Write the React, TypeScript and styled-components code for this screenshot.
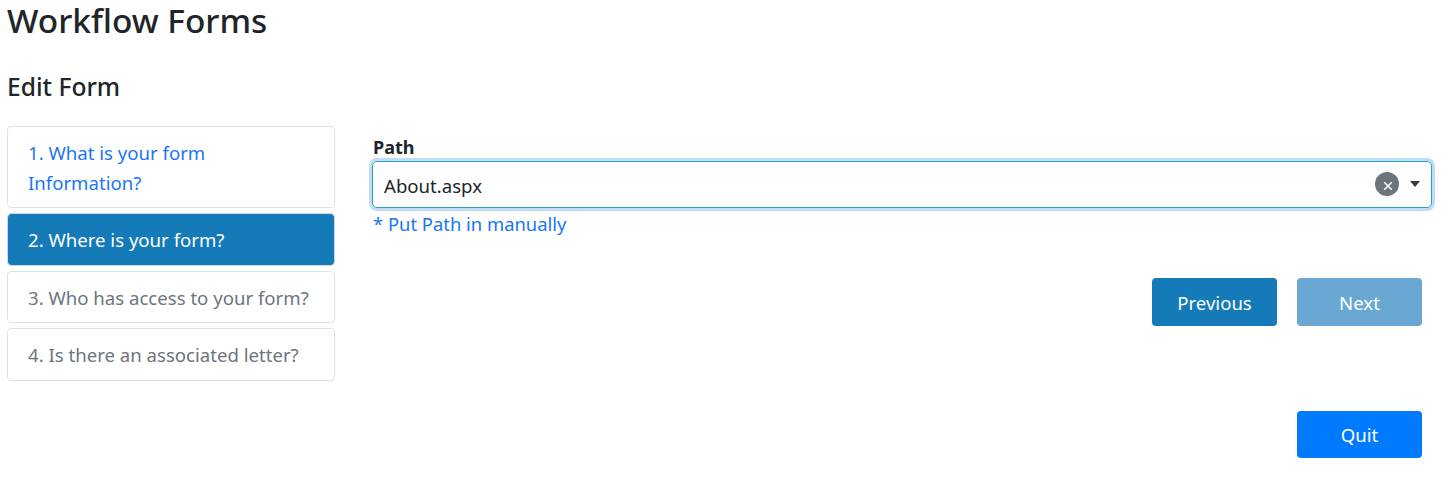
import React from 'react';
import styled, { createGlobalStyle } from 'styled-components';

const GlobalStyle = createGlobalStyle`
	* {
		box-sizing: border-box;
	}
	html, body {
		margin: 0;
		padding: 0;
		background: #fff;
		font-family: 'Noto Sans', 'Open Sans', sans-serif;
		color: #212529;
	}
`;

const Page = styled.div`
	width: 1443px;
	height: 486px;
	padding: 0 7px;
	overflow: hidden;
`;

const Title = styled.h1`
	margin: 0;
	height: 70px;
	font-size: 33.4px;
	line-height: 40px;
	font-weight: 500;
`;

const SubTitle = styled.h2`
	margin: 0;
	height: 56px;
	font-size: 24.6px;
	line-height: 34px;
	font-weight: 500;
`;

const Columns = styled.div`
	display: flex;
	align-items: flex-start;
`;

const Steps = styled.div`
	width: 328px;
	flex: none;
	display: flex;
	flex-direction: column;
	gap: 5px;
`;

const Step = styled.a<{ $state: 'done' | 'active' | 'todo' }>`
	display: block;
	padding: 11px 20px 10px;
	font-size: 18.6px;
	line-height: 29.6px;
	border-radius: 4px;
	border: 1px solid ${(p) => (p.$state === 'active' ? '#c4dbea' : '#dee2e8')};
	background: ${(p) => (p.$state === 'active' ? '#157ab8' : '#fff')};
	background-clip: padding-box;
	color: ${(p) =>
		p.$state === 'active' ? '#fff' : p.$state === 'done' ? '#1a76f5' : '#6c757d'};
`;

const Content = styled.div`
	flex: 1;
	margin-left: 37px;
	padding-top: 9px;
	min-width: 0;
`;

const Label = styled.label`
	display: block;
	height: 26px;
	padding-left: 1px;
	font-size: 18px;
	line-height: 24px;
	font-weight: 700;
	color: #212529;
`;

const Select = styled.div`
	display: flex;
	align-items: center;
	height: 47px;
	margin-right: 4px;
	padding: 0 11px;
	border: 1px solid #2a9fc4;
	border-radius: 5px;
	box-shadow: 0 0 0 3px #c0dcf7;
	font-size: 18.6px;
	color: #212529;
`;

const SelectValue = styled.span`
	flex: 1;
	padding-top: 1px;
`;

const ClearButton = styled.span`
	width: 24px;
	height: 24px;
	display: flex;
	align-items: center;
	justify-content: center;
	border-radius: 50%;
	background: #6c757d;
	margin-right: 11px;
	margin-bottom: 1px;
`;

const Caret = styled.span`
	width: 0;
	height: 0;
	margin-bottom: 1px;
	border-left: 5px solid transparent;
	border-right: 5px solid transparent;
	border-top: 6px solid #343a40;
`;

const Hint = styled.div`
	margin-top: 3px;
	padding-left: 1px;
	font-size: 18.4px;
	line-height: 26px;
	color: #1a76f5;
`;

const ButtonRow = styled.div<{ $top: number }>`
	display: flex;
	justify-content: flex-end;
	gap: 20px;
	margin-top: ${(p) => p.$top}px;
	margin-right: 14px;
`;

const Button = styled.button<{ $variant: 'primary' | 'muted' | 'quit' }>`
	width: 125px;
	height: ${(p) => (p.$variant === 'quit' ? 47 : 48)}px;
	border: 0;
	border-radius: 4px;
	font-family: inherit;
	font-size: 18.6px;
	color: #fff;
	background: ${(p) =>
		p.$variant === 'primary' ? '#157ab8' : p.$variant === 'muted' ? '#6aa8d3' : '#007bff'};
`;

export default function App() {
	return (
		<Page>
			<GlobalStyle />
			<Title>Workflow Forms</Title>
			<SubTitle>Edit Form</SubTitle>
			<Columns>
				<Steps>
					<Step $state="done">1. What is your form Information?</Step>
					<Step $state="active">2. Where is your form?</Step>
					<Step $state="todo">3. Who has access to your form?</Step>
					<Step $state="todo">4. Is there an associated letter?</Step>
				</Steps>
				<Content>
					<Label>Path</Label>
					<Select>
						<SelectValue>About.aspx</SelectValue>
						<ClearButton>
							<svg width="14" height="14" viewBox="0 0 14 14">
								<path d="M4.2 5.2l7.6 7.6M11.8 5.2l-7.6 7.6" stroke="#fff" strokeWidth="1.5" fill="none" />
							</svg>
						</ClearButton>
						<Caret />
					</Select>
					<Hint>* Put Path in manually</Hint>
					<ButtonRow $top={41}>
						<Button $variant="primary">Previous</Button>
						<Button $variant="muted">Next</Button>
					</ButtonRow>
					<ButtonRow $top={85}>
						<Button $variant="quit">Quit</Button>
					</ButtonRow>
				</Content>
			</Columns>
		</Page>
	);
}
